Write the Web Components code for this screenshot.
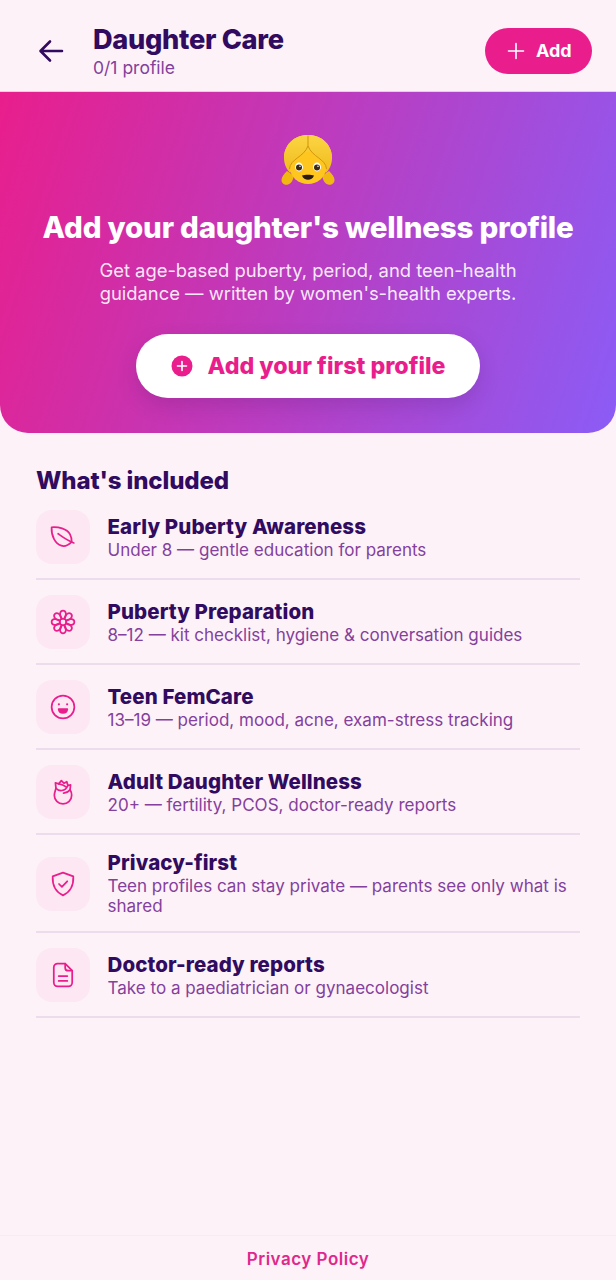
<!doctype html>
<html lang="en">
<head>
<meta charset="utf-8">
<title>Daughter Care</title>
<style>
  html, body { margin: 0; height: 100%; }
  body { background: #fdf2f8; font-family: Inter, "Noto Sans", sans-serif; }
  care-screen { height: 1280px; }
</style>
</head>
<body>
<care-screen>
  <care-header slot="header" heading="Daughter Care" sub="0/1 profile"></care-header>
  <care-hero slot="hero" heading="Add your daughter's wellness profile" action="Add your first profile">
    Get age-based puberty, period, and teen-health<br>guidance — written by women's-health experts.
  </care-hero>
  <care-section heading="What's included">
    <care-row icon="leaf" heading="Early Puberty Awareness">Under 8 — gentle education for parents</care-row>
    <care-row icon="flower" heading="Puberty Preparation">8–12 — kit checklist, hygiene &amp; conversation guides</care-row>
    <care-row icon="smile" heading="Teen FemCare">13–19 — period, mood, acne, exam-stress tracking</care-row>
    <care-row icon="rose" heading="Adult Daughter Wellness">20+ — fertility, PCOS, doctor-ready reports</care-row>
    <care-row icon="shield" heading="Privacy-first">Teen profiles can stay private — parents see only what is shared</care-row>
    <care-row icon="file" heading="Doctor-ready reports">Take to a paediatrician or gynaecologist</care-row>
  </care-section>
  <care-footer slot="footer">Privacy Policy</care-footer>
</care-screen>

<script>
// eight looped petals around the centre circle
const petals = Array.from({ length: 8 }, (_, i) =>
  `<path transform="rotate(${i * 45} 12 12)" d="M10.6 9.2C8.200 5 9.300 1.500 12 1.500s3.800 3.500 1.400 7.700"/>`).join('');

const ICONS = {
  leaf: `<path d="M1.500 3c6-.5 14 1 17 6.500 1.100 2 1.500 4.500 1.500 7-3 3-6.500 4.500-9.500 3.500C5 18.500 1 11 1.500 3z"/><path d="M7.500 9c3.500 2.500 8 6 14.500 8.500"/>`,
  flower: `<circle cx="12" cy="12" r="3"/>${petals}`,
  smile: `<circle cx="12" cy="12" r="10.500"/><circle cx="8.200" cy="9.500" r="1" fill="currentColor" stroke="none"/><circle cx="15.800" cy="9.500" r="1" fill="currentColor" stroke="none"/><path d="M8 14h8c-.3 2.200-1.900 3.500-4 3.500S8.300 16.200 8 14z" fill="currentColor"/>`,
  rose: `<path d="M5.500 8.500 5 3.500l3 1L10.500 1.500 13 4l2.500-1.500 1 3.500 2.500-.5L18.500 10c1 1.500 1.500 3.200 1.500 5 0 4.500-3.500 8-8 8s-8-3.500-8-8c0-2.500 1.200-4.500 1.500-6.500z"/><path d="M5.500 8.500c2.500 3 8.500 3.500 11-2.500M8 4.500c2.500.5 4.500 1 6.500 2.500M18.500 10c-1.500 2-3.500 3-6 3"/>`,
  shield: `<path d="M12 1.500 21.500 5c.4 8-2 14-9.500 17.500C4.500 19 2.100 13 2.500 5z"/><path d="m8.300 12 2.700 2.700 4.900-5.200"/>`,
  file: `<path d="M14 1.500H7A3.500 3.500 0 0 0 3.500 5v14A3.500 3.500 0 0 0 7 22.500h10a3.500 3.500 0 0 0 3.500-3.500V8z"/><path d="M14 1.500v3.700A2.800 2.800 0 0 0 16.800 8h3.700M8 13h8M8 17.500h8"/>`
};

class CareScreen extends HTMLElement {
  constructor() {
    super();
    this.attachShadow({ mode: 'open' });
    this.shadowRoot.innerHTML = `<style>
      :host { display: flex; flex-direction: column; color: #300b60; }
      main { flex: 1; display: flex; flex-direction: column; }
    </style>
    <slot name="header"></slot>
    <slot name="hero"></slot>
    <main><slot></slot></main>
    <slot name="footer"></slot>`;
  }
}

class CareHeader extends HTMLElement {
  constructor() {
    super();
    this.attachShadow({ mode: 'open' });
    this.shadowRoot.innerHTML = `<style>
      :host { display: flex; align-items: center; height: 92px; box-sizing: border-box; padding: 10px 24px 0 37px; background: #fdf2f8; border-bottom: 1px solid #e6cfe6; }
      .back { width: 28px; height: 28px; color: #300b60; margin-right: 28px; flex: none; }
      .text { flex: 1; margin-top: 2px; }
      h1 { margin: 0; font-size: 27.200px; line-height: 32px; font-weight: 800; letter-spacing: -.3px; color: #300b60; }
      p { margin: 1px 0 0; font-size: 17.500px; line-height: 22px; color: #83409c; }
      .add { display: flex; align-items: center; gap: 10px; width: 107px; height: 46px; box-sizing: border-box; padding-left: 21px; border-radius: 23px; background: #e91e8c; color: #fff; font-size: 18px; font-weight: 700; }
      .add svg { width: 20px; height: 20px; }
    </style>
    <svg class="back" viewBox="0 0 28 28" fill="none" stroke="currentColor" stroke-width="2.600" stroke-linecap="round" stroke-linejoin="round"><path d="M25 14H4M13 4.500 3.500 14l9.500 9.500"/></svg>
    <div class="text"><h1></h1><p></p></div>
    <div class="add"><svg viewBox="0 0 20 20" fill="none" stroke="currentColor" stroke-width="1.600" stroke-linecap="round"><path d="M10 2.500v15M2.500 10h15"/></svg><span>Add</span></div>`;
    this.shadowRoot.querySelector('h1').textContent = this.getAttribute('heading');
    this.shadowRoot.querySelector('p').textContent = this.getAttribute('sub');
  }
}

class CareHero extends HTMLElement {
  constructor() {
    super();
    this.attachShadow({ mode: 'open' });
    this.shadowRoot.innerHTML = `<style>
      :host { display: flex; flex-direction: column; align-items: center; height: 341px; box-sizing: border-box; padding-top: 41px; border-radius: 0 0 28px 28px; background: linear-gradient(108deg, #e91e8c 0%, #8b5cf6 100%); color: #fff; text-align: center; }
      svg.girl { width: 54px; height: 54px; display: block; }
      h2 { margin: 22px 0 0; font-size: 29.500px; line-height: 36px; font-weight: 800; letter-spacing: -.2px; white-space: nowrap; }
      p { margin: 14px 0 0; font-size: 18.400px; line-height: 23px; color: rgba(255,255,255,.9); }
      .cta { display: flex; align-items: center; justify-content: center; gap: 15px; width: 344px; height: 64px; margin-top: 29px; border-radius: 32px; background: #fff; color: #e91e8c; font-size: 23.200px; font-weight: 800; box-shadow: 0 8px 20px rgba(60,20,90,.18); }
      .cta svg { width: 22px; height: 22px; }
    </style>
    <svg class="girl" viewBox="0 0 54 54">
      <defs><linearGradient id="hair" x1="0" y1="0" x2="0" y2="1"><stop offset="0" stop-color="#fbd544"/><stop offset="1" stop-color="#f2bd20"/></linearGradient></defs>
      <path d="M6 38C3 41 .5 44 .5 47c0 3.500 3.500 5.500 6.500 4.500 3.500-1 5.500-5 5.500-9z" fill="#f2b812"/>
      <path d="M48 38c3 3 5.500 6 5.500 9 0 3.500-3.500 5.500-6.500 4.500-3.500-1-5.500-5-5.500-9z" fill="#f2b812"/>
      <path d="M27 2C13 2 3 12 3 25c0 6 2.500 11 5.500 14.500h37C48.500 36 51 31 51 25 51 12 41 2 27 2z" fill="url(#hair)"/>
      <ellipse cx="27" cy="35" rx="18" ry="16" fill="#ffc61f"/>
      <path d="M8.500 36C9 26 23 24 27 13c4 11 18 13 18.500 23l5.500-11C51 12 41 2 27 2S3 12 3 25z" fill="url(#hair)"/>
      <path d="M8.500 36C9 26 23 24 27 13c4 11 18 13 18.500 23M27 2.500V13" fill="none" stroke="#d1950c" stroke-width="1"/>
      <ellipse cx="18" cy="34" rx="4" ry="4.400" fill="#fff"/><ellipse cx="36" cy="34" rx="4" ry="4.400" fill="#fff"/>
      <circle cx="18" cy="34.500" r="3" fill="#3c2a12"/><circle cx="36" cy="34.500" r="3" fill="#3c2a12"/>
      <circle cx="19" cy="33.300" r=".8" fill="#fff"/><circle cx="37" cy="33.300" r=".8" fill="#fff"/>
      <path d="M21 42.500c3-1 9-1 12 0-1 3.200-3.500 4.200-6 4.200s-5-1-6-4.200z" fill="#2b1a10"/>
    </svg>
    <h2></h2>
    <p><slot></slot></p>
    <div class="cta"><svg viewBox="0 0 22 22"><circle cx="11" cy="11" r="10.500" fill="currentColor"/><path d="M11 6.500v9M6.500 11h9" stroke="#fff" stroke-width="1.600" stroke-linecap="round"/></svg><span></span></div>`;
    this.shadowRoot.querySelector('h2').textContent = this.getAttribute('heading');
    this.shadowRoot.querySelector('.cta span').textContent = this.getAttribute('action');
  }
}

class CareSection extends HTMLElement {
  constructor() {
    super();
    this.attachShadow({ mode: 'open' });
    this.shadowRoot.innerHTML = `<style>
      :host { display: block; padding: 32px 36px 0; }
      h3 { margin: 0 0 13px; font-size: 24px; line-height: 32px; font-weight: 800; letter-spacing: -.1px; color: #300b60; }
      .list { display: flex; flex-direction: column; }
    </style>
    <h3></h3><div class="list"><slot></slot></div>`;
    this.shadowRoot.querySelector('h3').textContent = this.getAttribute('heading');
  }
}

class CareRow extends HTMLElement {
  constructor() {
    super();
    this.attachShadow({ mode: 'open' });
    this.shadowRoot.innerHTML = `<style>
      :host { display: flex; align-items: center; gap: 17.500px; box-sizing: border-box; padding: 0 0 14px; margin-bottom: 15px; border-bottom: 2px solid #eddcec; }
      .icon { flex: none; display: flex; align-items: center; justify-content: center; width: 54px; height: 54px; border-radius: 16px; background: #fce7f3; color: #e91e8c; }
      .icon svg { width: 26px; height: 26px; }
      .text { flex: 1; min-width: 0; }
      h4 { margin: 0 0 1px; font-size: 20.500px; line-height: 25px; font-weight: 800; letter-spacing: .1px; color: #300b60; }
      p { margin: 0; padding-bottom: 1px; font-size: 17.050px; line-height: 20px; color: #83409c; }
    </style>
    <div class="icon"><svg viewBox="0 0 24 24" fill="none" stroke="currentColor" stroke-width="1.600" stroke-linecap="round" stroke-linejoin="round">${ICONS[this.getAttribute('icon')]}</svg></div>
    <div class="text"><h4></h4><p><slot></slot></p></div>`;
    this.shadowRoot.querySelector('h4').textContent = this.getAttribute('heading');
  }
}

class CareFooter extends HTMLElement {
  constructor() {
    super();
    this.attachShadow({ mode: 'open' });
    this.shadowRoot.innerHTML = `<style>
      :host { display: block; height: 45px; box-sizing: border-box; border-top: 1px solid #faeaf4; padding-top: 12px; text-align: center; font-size: 17px; line-height: 22px; font-weight: 600; letter-spacing: .5px; color: #e0288c; }
    </style><slot></slot>`;
  }
}

customElements.define('care-screen', CareScreen);
customElements.define('care-header', CareHeader);
customElements.define('care-hero', CareHero);
customElements.define('care-section', CareSection);
customElements.define('care-row', CareRow);
customElements.define('care-footer', CareFooter);
</script>
</body>
</html>
